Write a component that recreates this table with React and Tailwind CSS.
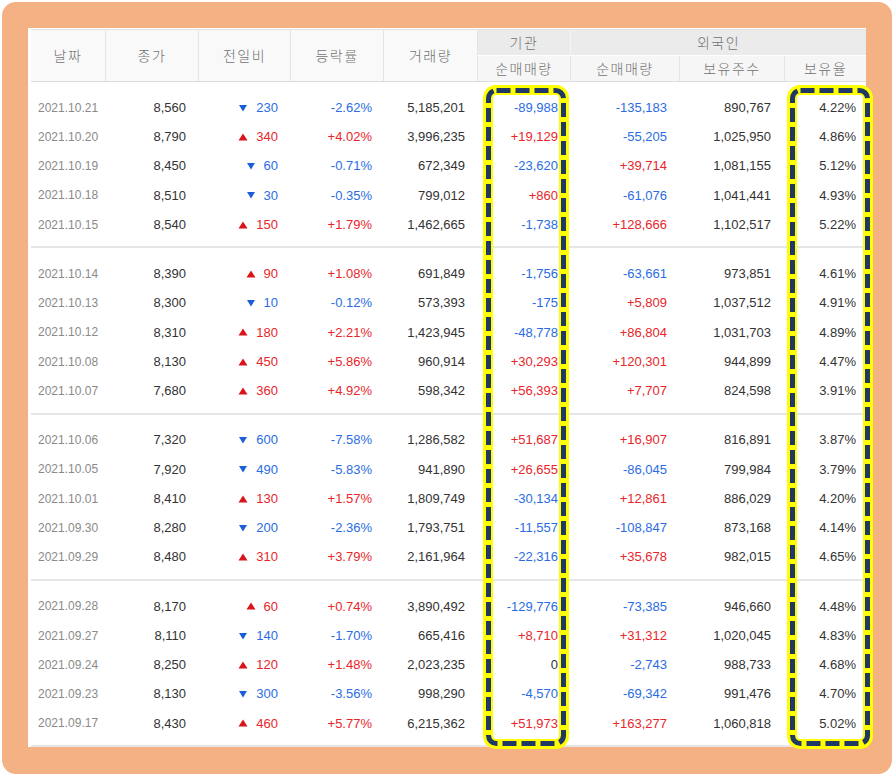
import React from 'react';

const groups = [
  [
    ['2021.10.21', '8,560', 'down', '230', '-2.62%', '5,185,201', '-89,988', '-135,183', '890,767', '4.22%'],
    ['2021.10.20', '8,790', 'up', '340', '+4.02%', '3,996,235', '+19,129', '-55,205', '1,025,950', '4.86%'],
    ['2021.10.19', '8,450', 'down', '60', '-0.71%', '672,349', '-23,620', '+39,714', '1,081,155', '5.12%'],
    ['2021.10.18', '8,510', 'down', '30', '-0.35%', '799,012', '+860', '-61,076', '1,041,441', '4.93%'],
    ['2021.10.15', '8,540', 'up', '150', '+1.79%', '1,462,665', '-1,738', '+128,666', '1,102,517', '5.22%'],
  ],
  [
    ['2021.10.14', '8,390', 'up', '90', '+1.08%', '691,849', '-1,756', '-63,661', '973,851', '4.61%'],
    ['2021.10.13', '8,300', 'down', '10', '-0.12%', '573,393', '-175', '+5,809', '1,037,512', '4.91%'],
    ['2021.10.12', '8,310', 'up', '180', '+2.21%', '1,423,945', '-48,778', '+86,804', '1,031,703', '4.89%'],
    ['2021.10.08', '8,130', 'up', '450', '+5.86%', '960,914', '+30,293', '+120,301', '944,899', '4.47%'],
    ['2021.10.07', '7,680', 'up', '360', '+4.92%', '598,342', '+56,393', '+7,707', '824,598', '3.91%'],
  ],
  [
    ['2021.10.06', '7,320', 'down', '600', '-7.58%', '1,286,582', '+51,687', '+16,907', '816,891', '3.87%'],
    ['2021.10.05', '7,920', 'down', '490', '-5.83%', '941,890', '+26,655', '-86,045', '799,984', '3.79%'],
    ['2021.10.01', '8,410', 'up', '130', '+1.57%', '1,809,749', '-30,134', '+12,861', '886,029', '4.20%'],
    ['2021.09.30', '8,280', 'down', '200', '-2.36%', '1,793,751', '-11,557', '-108,847', '873,168', '4.14%'],
    ['2021.09.29', '8,480', 'up', '310', '+3.79%', '2,161,964', '-22,316', '+35,678', '982,015', '4.65%'],
  ],
  [
    ['2021.09.28', '8,170', 'up', '60', '+0.74%', '3,890,492', '-129,776', '-73,385', '946,660', '4.48%'],
    ['2021.09.27', '8,110', 'down', '140', '-1.70%', '665,416', '+8,710', '+31,312', '1,020,045', '4.83%'],
    ['2021.09.24', '8,250', 'up', '120', '+1.48%', '2,023,235', '0', '-2,743', '988,733', '4.68%'],
    ['2021.09.23', '8,130', 'down', '300', '-3.56%', '998,290', '-4,570', '-69,342', '991,476', '4.70%'],
    ['2021.09.17', '8,430', 'up', '460', '+5.77%', '6,215,362', '+51,973', '+163,277', '1,060,818', '5.02%'],
  ],
];

const cols = 'grid grid-cols-[74px_93px_92px_93px_94px_93px_109px_105px_82px]';

// colour for signed values
function tone(v) {
  if (v.startsWith('+')) return 'text-[#e8262a]';
  if (v.startsWith('-')) return 'text-[#2a6de3]';
  return 'text-[#333]';
}

function Arrow({ dir }) {
  if (dir === 'up') {
    return (
      <svg width="10" height="8" viewBox="0 0 10 8" className="mr-[8px]">
        <path d="M5 0.5 L9.5 7.5 L0.5 7.5 Z" fill="#d9141a" />
      </svg>
    );
  }
  return (
    <svg width="10" height="8" viewBox="0 0 10 8" className="mr-[8px]">
      <path d="M1 1 L9 1 L5 7.5 Z" fill="#1b5fd8" />
    </svg>
  );
}

function DashBox({ left }) {
  return (
    <svg
      className="absolute top-[85px] pointer-events-none"
      style={{ left }}
      width="86"
      height="664"
      viewBox="0 0 86 664"
    >
      <rect x="5" y="5" width="76" height="654" rx="8" fill="none" stroke="#ffff00" strokeWidth="10" />
      <rect x="5.5" y="5.5" width="75" height="653" rx="8" fill="none" stroke="#203864" strokeWidth="5" strokeDasharray="14 5" />
    </svg>
  );
}

function Row({ r }) {
  const [date, close, dir, diff, rate, vol, inst, frn, hold, pct] = r;
  const dirTone = dir === 'up' ? 'text-[#e8262a]' : 'text-[#2a6de3]';
  return (
    <div className={`${cols} h-[29.25px] items-center text-[13px] text-[#333]`}>
      <div className="pl-[7px] text-[12px] text-[#8a8a8a]">{date}</div>
      <div className="text-right pr-[12px]">{close}</div>
      <div className={`flex items-center justify-end pr-[12px] ${dirTone}`}>
        <Arrow dir={dir} />
        <span>{diff}</span>
      </div>
      <div className={`text-right pr-[11px] ${tone(rate)}`}>{rate}</div>
      <div className="text-right pr-[12px]">{vol}</div>
      <div className={`text-right pr-[12px] ${tone(inst)}`}>{inst}</div>
      <div className={`text-right pr-[12px] ${tone(frn)}`}>{frn}</div>
      <div className="text-right pr-[13px]">{hold}</div>
      <div className="text-right pr-[10px]">{pct}</div>
    </div>
  );
}

export default function App() {
  const head = 'flex items-center justify-center text-[14px] tracking-[1.5px] text-[#727272] font-light';
  return (
    <div
      className="relative w-[894px] h-[776px] bg-white p-[2px]"
      style={{ fontFamily: '"Liberation Sans", "Noto Sans CJK KR", sans-serif' }}
    >
      <div className="h-full rounded-[14px] bg-[#f4b183] pt-[26px] pl-[26px] pr-[26px]">
        <div className="w-[838px] h-[719px] bg-white pl-[3px] pt-[1px]">
          {/* header */}
          <div
            className={`${cols} grid-rows-[25px_26px] border-t border-b border-t-[#e2e2e2] border-b-[#dcdcdc]`}
            style={{ fontFamily: '"Noto Sans CJK KR", sans-serif' }}
          >
            <div className={`${head} row-span-2 bg-[#f9f9f9]`}>날짜</div>
            <div className={`${head} row-span-2 bg-[#f9f9f9] border-l border-[#e4e4e4]`}>종가</div>
            <div className={`${head} row-span-2 bg-[#f9f9f9] border-l border-[#e4e4e4]`}>전일비</div>
            <div className={`${head} row-span-2 bg-[#f9f9f9] border-l border-[#e4e4e4]`}>등락률</div>
            <div className={`${head} row-span-2 bg-[#f9f9f9] border-l border-[#e4e4e4]`}>거래량</div>
            <div className={`${head} bg-[#ebebeb] border-l border-[#e4e4e4]`}>기관</div>
            <div className={`${head} col-span-3 bg-[#ebebeb] border-l border-[#f6f6f6]`}>외국인</div>
            <div className={`${head} bg-[#f6f6f6] border-l border-t border-l-[#e4e4e4] border-t-white`}>순매매량</div>
            <div className={`${head} bg-[#f6f6f6] border-l border-t border-l-[#e4e4e4] border-t-white`}>순매매량</div>
            <div className={`${head} bg-[#f6f6f6] border-l border-t border-l-[#e4e4e4] border-t-white`}>보유주수</div>
            <div className={`${head} bg-[#f6f6f6] border-l border-t border-l-[#e4e4e4] border-t-white`}>보유율</div>
          </div>

          {groups.map((g, i) => (
            <div key={i} className="pt-[11px] pb-[7px] border-b-2 border-[#e6e6e6]">
              {g.map((r) => (
                <Row key={r[0]} r={r} />
              ))}
            </div>
          ))}
        </div>
      </div>

      <DashBox left={483} />
      <DashBox left={787} />
    </div>
  );
}
